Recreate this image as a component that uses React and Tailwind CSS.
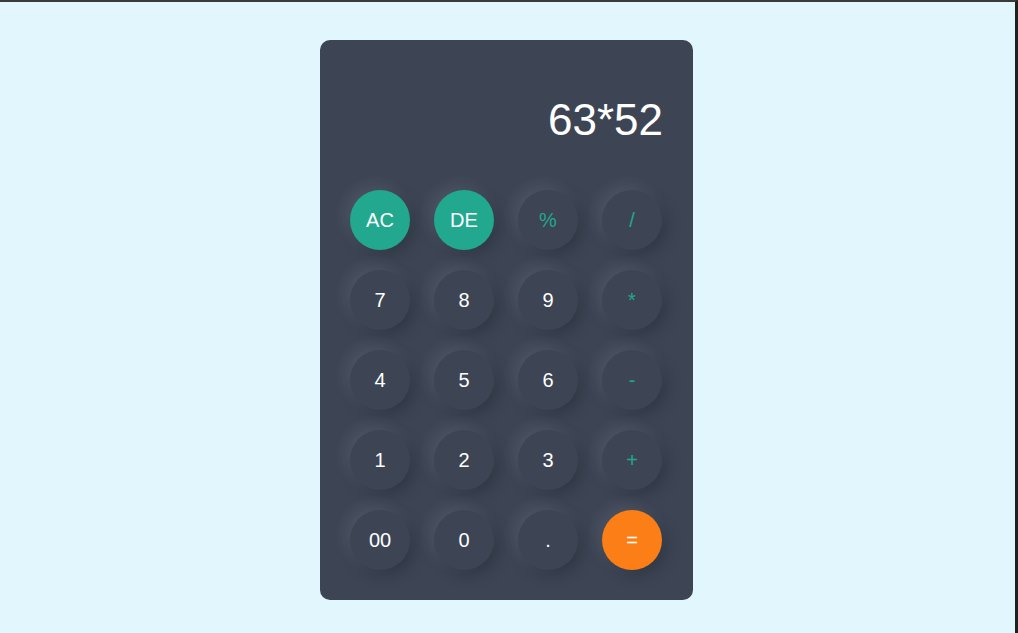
import React from "react";

const keys = [
  { l: "AC", t: "fn" },
  { l: "DE", t: "fn" },
  { l: "%", t: "op" },
  { l: "/", t: "op" },
  { l: "7" },
  { l: "8" },
  { l: "9" },
  { l: "*", t: "op" },
  { l: "4" },
  { l: "5" },
  { l: "6" },
  { l: "-", t: "op" },
  { l: "1" },
  { l: "2" },
  { l: "3" },
  { l: "+", t: "op" },
  { l: "00" },
  { l: "0" },
  { l: "." },
  { l: "=", t: "eq" },
];

function Key({ k }) {
  let cls = "bg-[#3d4555] text-white";
  if (k.t === "fn") cls = "bg-[#21a88e] text-white";
  if (k.t === "op") cls = "bg-[#3d4555] text-[#21a88e]";
  if (k.t === "eq") cls = "bg-[#fb7e17] text-white";
  return (
    <button
      className={`w-[60px] h-[60px] rounded-full flex items-center justify-center text-[20px] leading-none ${cls} shadow-[-5px_-5px_15px_rgba(255,255,255,0.09),5px_5px_15px_rgba(0,0,0,0.22)]`}
    >
      {k.l}
    </button>
  );
}

export default function App() {
  return (
    <div
      className="w-full h-[633px] bg-[#e2f6fe] border-t-2 border-t-[#3a3a3a] border-r-[3px] border-r-[#202020] flex justify-center"
      style={{ fontFamily: '"Liberation Sans", Arial, sans-serif' }}
    >
      <div className="mt-[38px] mr-[2px] w-[373px] h-[560px] bg-[#3d4555] rounded-[10px] px-[30px] pt-[30px] pb-[30px] flex flex-col">
        <div className="h-[74px] flex items-end justify-end text-white text-[44px] leading-[49px] mb-[46px]">
          63*52
        </div>
        <div className="grid grid-cols-[repeat(4,60px)] gap-x-[24px] gap-y-[20px]">
          {keys.map((k) => (
            <Key key={k.l} k={k} />
          ))}
        </div>
      </div>
    </div>
  );
}
